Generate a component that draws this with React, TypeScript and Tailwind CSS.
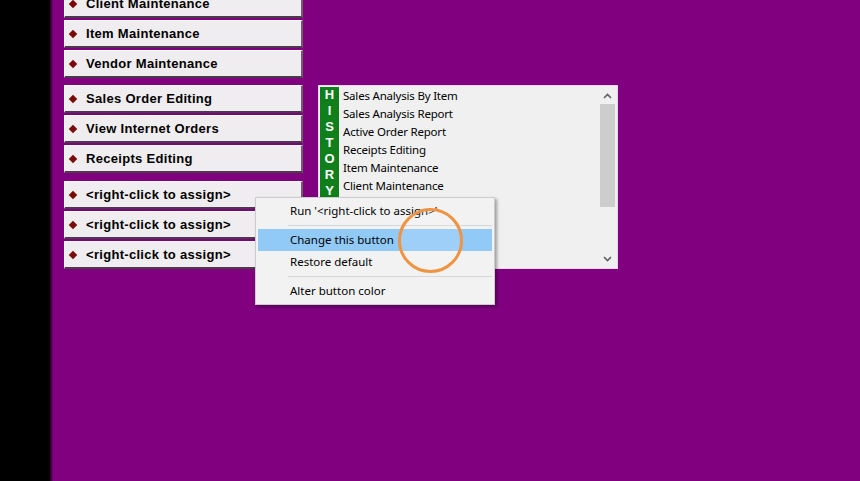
import React from "react";

const groups: string[][] = [
  ["Client Maintenance", "Item Maintenance", "Vendor Maintenance"],
  ["Sales Order Editing", "View Internet Orders", "Receipts Editing"],
  ["<right-click to assign>", "<right-click to assign>", "<right-click to assign>"],
];

const history = [
  "Sales Analysis By Item",
  "Sales Analysis Report",
  "Active Order Report",
  "Receipts Editing",
  "Item Maintenance",
  "Client Maintenance",
];

function MenuButton({ label }: { label: string }) {
  return (
    <div className="h-[28px] w-[239px] flex items-center bg-[#efedef] border-t border-l border-t-white border-l-white border-r-2 border-b-2 border-r-[#6e5c6e] border-b-[#4a3a4a] pl-[5px]">
      <span className="w-[6px] h-[6px] rotate-45 bg-[#7a0a0a] shrink-0" />
      <span className="ml-[10px] text-[13px] font-bold tracking-[0.3px] text-black whitespace-nowrap [font-family:'Liberation_Sans',Arial,sans-serif]">
        {label}
      </span>
    </div>
  );
}

function Chevron({ up }: { up?: boolean }) {
  return (
    <svg width="9" height="6" viewBox="0 0 9 6" className={up ? "" : "rotate-180"}>
      <path d="M1 5 L4.5 1.5 L8 5" fill="none" stroke="#606060" strokeWidth="1.6" />
    </svg>
  );
}

export default function App() {
  return (
    <div className="relative w-[860px] h-[481px] overflow-hidden bg-[#800080] flex">
      {/* dark frame on the left */}
      <div className="w-[50px] h-full bg-black shrink-0" />
      <div className="w-[3px] h-full bg-gradient-to-r from-[#200020] to-[#800080] shrink-0" />

      <div className="flex items-start pl-[11px]">
        {/* button column */}
        <div className="flex flex-col mt-[-10px]">
          {groups.map((g, gi) => (
            <div
              key={gi}
              className={
                gi === 0
                  ? "flex flex-col gap-[2px] mb-[7px]"
                  : gi === 1
                  ? "flex flex-col gap-[2px] mb-[8px]"
                  : "flex flex-col gap-[2px]"
              }
            >
              {g.map((label, i) => (
                <MenuButton key={i} label={label} />
              ))}
            </div>
          ))}
        </div>

        {/* history list */}
        <div className="ml-[15px] mt-[85px] w-[300px] h-[184px] flex border border-[#e6d6e6] bg-[#f0f0f0] p-[1px]">
          <div className="w-[19px] h-full bg-[#0f7f1c] flex flex-col items-center text-white text-[13px] font-bold leading-[16px] [font-family:'Liberation_Sans',Arial,sans-serif]">
            {"HISTORY".split("").map((c, i) => (
              <span key={i}>{c}</span>
            ))}
          </div>
          <div className="flex-1 overflow-hidden pl-[4px] text-[11.5px] tracking-[-0.2px] leading-[18px] text-black [font-family:'Noto_Sans',sans-serif]">
            {history.map((h, i) => (
              <div key={i} className="whitespace-nowrap">
                {h}
              </div>
            ))}
          </div>
          <div className="w-[17px] h-full flex flex-col bg-[#f0f0f0]">
            <div className="h-[17px] flex items-center justify-center">
              <Chevron up />
            </div>
            <div className="flex-1 flex flex-col">
              <div className="h-[103px] mx-[1px] bg-[#cdcdcd]" />
            </div>
            <div className="h-[17px] flex items-center justify-center">
              <Chevron />
            </div>
          </div>
        </div>
      </div>

      {/* context menu */}
      <div className="absolute left-[255px] top-[197px] w-[240px] bg-[#f2f2f2] border border-[#cccccc] shadow-[2px_2px_3px_rgba(0,0,0,0.35)] py-[2px] text-[11.5px] text-black [font-family:'Noto_Sans',sans-serif]">
        <div className="h-[22px] flex items-center pl-[34px]">Run '&lt;right-click to assign&gt;'</div>
        <div className="h-[7px] flex items-center ml-[32px] mr-[2px]">
          <div className="h-px w-full bg-[#d7d7d7]" />
        </div>
        <div className="h-[22px] mx-[2px] flex items-center pl-[32px] bg-[#91c9f7]">Change this button</div>
        <div className="h-[22px] flex items-center pl-[34px]">Restore default</div>
        <div className="h-[7px] flex items-center ml-[32px] mr-[2px]">
          <div className="h-px w-full bg-[#d7d7d7]" />
        </div>
        <div className="h-[22px] flex items-center pl-[34px]">Alter button color</div>
      </div>

      {/* click marker */}
      <div className="absolute left-[398px] top-[208px] w-[65px] h-[65px] rounded-full border-[3px] border-[#ef9442] bg-[rgba(255,255,255,0.12)]" />
    </div>
  );
}
